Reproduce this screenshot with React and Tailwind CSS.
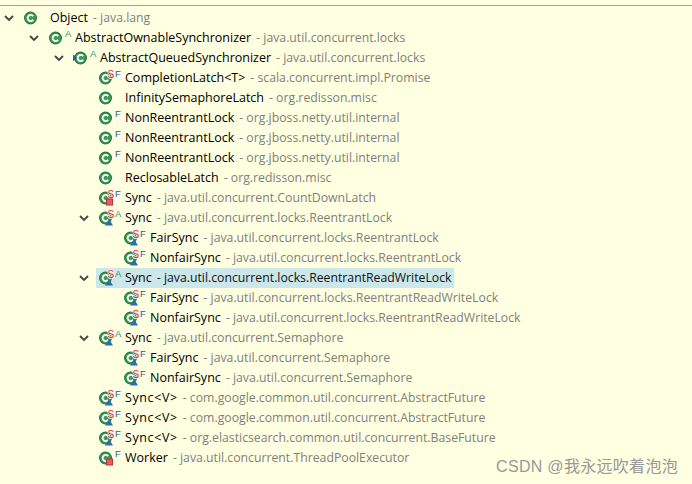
import React from "react";

const rows = [
  { depth: 0, open: true, name: "Object", pkg: "java.lang" },
  { depth: 1, open: true, name: "AbstractOwnableSynchronizer", pkg: "java.util.concurrent.locks", mod: "A" },
  { depth: 2, open: true, name: "AbstractQueuedSynchronizer", pkg: "java.util.concurrent.locks", mod: "A", run: true },
  { depth: 3, name: "CompletionLatch<T>", pkg: "scala.concurrent.impl.Promise", mod: "F", stat: true },
  { depth: 3, name: "InfinitySemaphoreLatch", pkg: "org.redisson.misc" },
  { depth: 3, name: "NonReentrantLock", pkg: "org.jboss.netty.util.internal", mod: "F" },
  { depth: 3, name: "NonReentrantLock", pkg: "org.jboss.netty.util.internal", mod: "F" },
  { depth: 3, name: "NonReentrantLock", pkg: "org.jboss.netty.util.internal", mod: "F" },
  { depth: 3, name: "ReclosableLatch", pkg: "org.redisson.misc" },
  { depth: 3, name: "Sync", pkg: "java.util.concurrent.CountDownLatch", mod: "F", stat: true, vis: "private" },
  { depth: 3, open: true, name: "Sync", pkg: "java.util.concurrent.locks.ReentrantLock", mod: "A", stat: true, vis: "default" },
  { depth: 4, name: "FairSync", pkg: "java.util.concurrent.locks.ReentrantLock", mod: "F", stat: true, vis: "default" },
  { depth: 4, name: "NonfairSync", pkg: "java.util.concurrent.locks.ReentrantLock", mod: "F", stat: true, vis: "default" },
  { depth: 3, open: true, selected: true, name: "Sync", pkg: "java.util.concurrent.locks.ReentrantReadWriteLock", mod: "A", stat: true, vis: "default" },
  { depth: 4, name: "FairSync", pkg: "java.util.concurrent.locks.ReentrantReadWriteLock", mod: "F", stat: true, vis: "default" },
  { depth: 4, name: "NonfairSync", pkg: "java.util.concurrent.locks.ReentrantReadWriteLock", mod: "F", stat: true, vis: "default" },
  { depth: 3, open: true, name: "Sync", pkg: "java.util.concurrent.Semaphore", mod: "A", stat: true, vis: "default" },
  { depth: 4, name: "FairSync", pkg: "java.util.concurrent.Semaphore", mod: "F", stat: true, vis: "default" },
  { depth: 4, name: "NonfairSync", pkg: "java.util.concurrent.Semaphore", mod: "F", stat: true, vis: "default" },
  { depth: 3, wide: true, name: "Sync<V>", pkg: "com.google.common.util.concurrent.AbstractFuture", mod: "F", stat: true, vis: "default" },
  { depth: 3, wide: true, name: "Sync<V>", pkg: "com.google.common.util.concurrent.AbstractFuture", mod: "F", stat: true, vis: "default" },
  { depth: 3, wide: true, name: "Sync<V>", pkg: "org.elasticsearch.common.util.concurrent.BaseFuture", mod: "F", stat: true, vis: "default" },
  { depth: 3, name: "Worker", pkg: "java.util.concurrent.ThreadPoolExecutor", mod: "F", vis: "private" },
];

// eclipse style class icon with its overlay markers
function ClassIcon({ mod, stat, vis, run }) {
  return (
    <svg width="25" height="18" viewBox="0 0 25 18" className="shrink-0">
      <circle cx="7.5" cy="9" r="5.9" fill="#3f9a55" stroke="#2a7a42" strokeWidth="1.2" />
      <path d="M10.2 7.1A3.1 3.1 0 1 0 10.2 10.9" fill="none" stroke="#fff" strokeWidth="1.8" />
      {run && <path d="M0 5.5L4 9L0 12.5Z" fill="#2a5ea8" />}
      {stat && (
        <text x="9.5" y="9" fontSize="10" fill="#d6204f" stroke="#ffffe1" strokeWidth="1.5" paintOrder="stroke" fontFamily="Liberation Sans, sans-serif">S</text>
      )}
      {mod && (
        <text x="17" y="8" fontSize="9.5" fill={mod === "A" ? "#2f8f6a" : "#2a5a9c"} fontFamily="Liberation Sans, sans-serif">{mod}</text>
      )}
      {vis === "default" && <path d="M7 16.5L11 10L15 16.5Z" fill="#2f6cab" />}
      {vis === "private" && <rect x="8.5" y="10" width="6" height="6" fill="#ee5b66" stroke="#b8303c" strokeWidth="1" />}
    </svg>
  );
}

function Chevron() {
  return (
    <svg width="10" height="7" viewBox="0 0 10 7" className="shrink-0">
      <path d="M1 1L5 5L9 1" fill="none" stroke="#444" strokeWidth="1.8" />
    </svg>
  );
}

function Row({ depth, open, name, pkg, mod, stat, vis, run, selected, wide }) {
  return (
    <div className="flex h-5 items-center" style={{ paddingLeft: 4 + depth * 25 }}>
      <div className="flex w-[17px] shrink-0 justify-start">{open && <Chevron />}</div>
      <div className={`flex h-5 items-center pl-[2px] pr-[2px] ${selected ? "bg-[#cbe7ea]" : ""}`}>
        <ClassIcon mod={mod} stat={stat} vis={vis} run={run} />
        <span className={`ml-[2px] whitespace-pre text-[12.5px] text-black ${wide ? "tracking-[0.6px]" : ""}`}>{name}</span>
        <span className={`ml-[5px] whitespace-pre text-[12.25px] ${selected ? "text-[#111]" : "text-[#808080]"}`}>{"- " + pkg}</span>
      </div>
    </div>
  );
}

export default function App() {
  return (
    <div className="relative h-[484px] w-[692px] overflow-hidden bg-[#ffffe1] font-['Open_Sans',sans-serif]">
      <div className="h-[6px] border-b border-[#a3a3a0]" />
      <div className="pt-[2px]">
        {rows.map((r, i) => (
          <Row key={i} {...r} />
        ))}
      </div>
      <div className="absolute right-[14px] bottom-[7px] font-['Liberation_Sans','Noto_Sans_CJK_SC',sans-serif] text-[16px] leading-[20px] tracking-[0.3px] text-[#999]">
        CSDN @我永远吹着泡泡
      </div>
    </div>
  );
}
